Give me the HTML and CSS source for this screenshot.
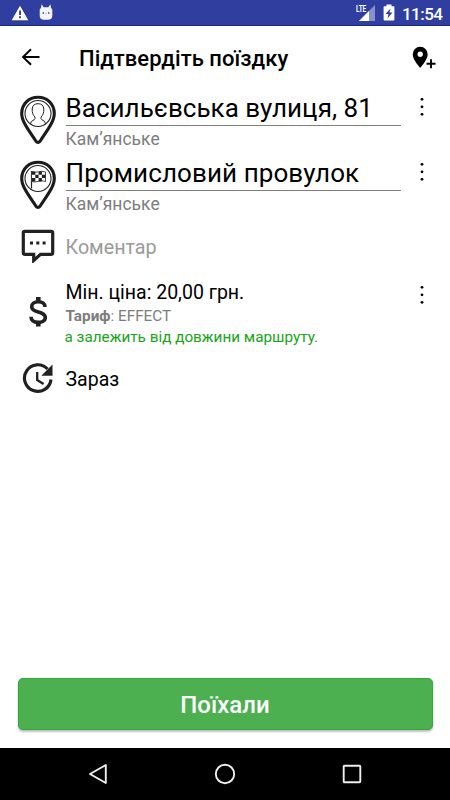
FILE: index.html
```html
<!DOCTYPE html>
<html lang="uk">
<head>
<meta charset="utf-8">
<title>Підтвердіть поїздку</title>
<link rel="stylesheet" href="styles.css">
</head>
<body>
<div class="screen">
  <div class="status">
    <svg class="warn" width="18" height="16" viewBox="0 0 18 16"><path d="M9 0.800 17.300 15.200H0.700Z" fill="#fff"/><path d="M8.100 5.500h1.900v4.500H8.100zM8.100 11.300h1.900v1.900H8.100z" fill="#303f9f"/></svg>
    <svg class="cat" width="14" height="17" viewBox="0 0 14 17"><path d="M2.700.300 4.600 3.200h4.800L11.300.300l.9 3.900Q13.300 4.600 13.300 6V11.500q0 4.300-4.500 4.300H5.200Q.7 15.800.7 11.500V6Q.7 4.600 1.800 4.200Z" fill="#f3f5ff"/><path d="M3.600 9h1.400M9 9h1.400" stroke="#303f9f" stroke-width="1.300"/><path d="M6 9.300h2" stroke="#b8c0ef"/></svg>
    <span class="grow"></span>
    <span class="signal"><svg width="16" height="16" viewBox="0 0 16 16"><path d="M16 0V16H0Z" fill="#8891c9"/><path d="M10 6v10H0Z" fill="#fff"/></svg><span class="lte">LTE</span></span>
    <svg class="battery" width="12" height="17" viewBox="0 0 12 17"><path d="M3.500.5h5v1.700H10.500q.9 0 .9.900V15.500q0 .9-.9.900h-9q-.9 0-.9-.9V3.100q0-.9.900-.9h2Z" fill="#fff"/><path d="M7.500 4.500 2.500 10h3l-1 4.500L9.500 8.500h-3Z" fill="#303f9f"/></svg>
    <span class="time">11:54</span>
  </div>

  <div class="appbar">
    <svg class="back" width="20" height="18" viewBox="0 0 20 18"><path d="M18.500 9H2M10 1.200 2 9l8 7.800" fill="none" stroke="#000" stroke-width="1.900"/></svg>
    <h1>Підтвердіть поїздку</h1>
    <svg class="addpin" width="24" height="24" viewBox="0 0 24 24"><path fill-rule="evenodd" d="M8.200.8A7.500 7.500 0 0 0 .7 8.300C.7 13.700 8.200 22 8.200 22s7.500-8.300 7.500-13.700A7.500 7.500 0 0 0 8.200.8Zm0 4.700a2.700 2.700 0 1 1 0 5.400 2.700 2.700 0 0 1 0-5.400Z"/><path d="M14.500 17.800h9M19 13.300v9" stroke="#000" stroke-width="1.900"/></svg>
  </div>

  <div class="row place">
    <svg class="icon" width="38" height="50" viewBox="0 0 38 50"><path d="M19 2.200C9.700 2.200 2.700 9 2.700 18.400c0 8 6.800 16.600 14.100 27.600q2.200 3 4.400 0C28.500 35 35.300 26.400 35.300 18.400 35.300 9 28.300 2.200 19 2.200Z" fill="#fff" stroke="#1b1b1b" stroke-width="3.100"/><circle cx="19" cy="18.500" r="13" fill="none" stroke="#222" stroke-width="1.100"/><path d="M11.500 29q0-3 3.500-4.200 1.700-.8.900-2.800c-2-2-2.900-4.500-2.700-8q.3-5.300 5.800-5.300t5.800 5.300c.2 3.500-.7 6-2.700 8q-.8 2 .9 2.800 3.500 1.200 3.500 4.200" fill="none" stroke="#222"/></svg>
    <div class="body"><div class="address">Васильєвська вулиця, 81</div><div class="city">Кам’янське</div></div>
    <svg class="dots" width="4" height="20" viewBox="0 0 4 20"><circle cx="2" cy="2.300" r="1.400"/><circle cx="2" cy="9.800" r="1.400"/><circle cx="2" cy="17.300" r="1.400"/></svg>
  </div>

  <div class="row place">
    <svg class="icon" width="38" height="50" viewBox="0 0 38 50"><path d="M19 2.200C9.700 2.200 2.700 9 2.700 18.400c0 8 6.800 16.600 14.100 27.600q2.200 3 4.400 0C28.500 35 35.300 26.400 35.300 18.400 35.300 9 28.300 2.200 19 2.200Z" fill="#fff" stroke="#1b1b1b" stroke-width="3.100"/><circle cx="19" cy="18.500" r="13" fill="none" stroke="#222" stroke-width="1.100"/><path d="M12.500 11v17.500" stroke="#222" stroke-width="1.200"/><path d="M12.500 11.500q3.500 1.500 7 .3t7 .2v9.500q-3.500-1.400-7-.2t-7 .2Z" fill="#fff" stroke="#222" stroke-width=".8"/><path d="M13 11.500h3.300v3.300H13zM19.600 11.500h3.300v3.300h-3.300zM16.300 14.800h3.300v3.300h-3.300zM22.900 14.800h3.300v3.300h-3.300zM13 18.100h3.300v3.300H13zM19.600 18.100h3.300v3.300h-3.300z" fill="#222"/></svg>
    <div class="body"><div class="address second">Промисловий провулок</div><div class="city">Кам’янське</div></div>
    <svg class="dots" width="4" height="20" viewBox="0 0 4 20"><circle cx="2" cy="2.300" r="1.400"/><circle cx="2" cy="9.800" r="1.400"/><circle cx="2" cy="17.300" r="1.400"/></svg>
  </div>

  <div class="row comment">
    <svg class="icon" width="34" height="34" viewBox="0 0 34 34"><path d="M4 2.400h26q1.700 0 1.700 1.700v19.600q0 1.700-1.700 1.700H19.500L12.700 31.500V25.400H4q-1.700 0-1.700-1.700V4.100Q2.300 2.400 4 2.400Z" fill="none" stroke="#212121" stroke-width="3.200"/><path d="M9 12.400h3v3H9zM15.300 12.400h3v3h-3zM21.600 12.400h3v3h-3z" fill="#212121"/></svg>
    <div class="body hint">Коментар</div>
  </div>

  <div class="row price">
    <svg class="icon" width="18" height="32" viewBox="0 0 18 32"><path d="M9.300 1v5M9.300 26v4.500" stroke="#212121" stroke-width="4.600"/><path d="M16 11C16 7.500 13 5.800 9.300 5.800 5.300 5.800 2.700 7.800 2.700 10.700c0 3.300 2.600 4.300 6.600 5.300s7 2.200 7 5.500c0 3-2.900 4.900-7 4.900-4.500 0-7.200-2-7.300-5.600" fill="none" stroke="#212121" stroke-width="3.600"/></svg>
    <div class="body"><div class="main">Мін. ціна: 20,00 грн.</div><div class="tariff"><b>Тариф</b>: EFFECT</div><div class="note">а залежить від довжини маршруту.</div></div>
    <svg class="dots" width="4" height="20" viewBox="0 0 4 20"><circle cx="2" cy="2.300" r="1.400"/><circle cx="2" cy="9.800" r="1.400"/><circle cx="2" cy="17.300" r="1.400"/></svg>
  </div>

  <div class="row when">
    <svg class="icon" width="32" height="32" viewBox="0 0 32 32"><path d="M25.500 6A13.300 13.300 0 1 0 29 16.500" fill="none" stroke="#212121" stroke-width="3.200"/><path d="M30.500 1.500V12.700H19.300Z" fill="#212121"/><path d="M15.200 9v8l6.400 4" fill="none" stroke="#212121" stroke-width="2.300"/></svg>
    <div class="body main">Зараз</div>
  </div>

  <span class="grow"></span>
  <button class="go">Поїхали</button>

  <div class="nav">
    <svg width="20" height="22" viewBox="0 0 20 22"><path d="M17.800 2v18L2 11Z" fill="none" stroke="#eee" stroke-width="1.900" stroke-linejoin="round"/></svg>
    <svg width="22" height="22" viewBox="0 0 22 22"><circle cx="11" cy="11" r="9.200" fill="none" stroke="#eee" stroke-width="1.900"/></svg>
    <svg width="20" height="22" viewBox="0 0 20 22"><rect x="1.700" y="2.700" width="16.600" height="16.600" rx=".8" fill="none" stroke="#eee" stroke-width="1.900"/></svg>
  </div>
</div>
</body>
</html>
```
FILE: styles.css
```css
* { box-sizing: border-box; }
body { margin: 0; background: #fff; color: #000; font-family: Roboto, "Liberation Sans", sans-serif; }
svg { display: block; flex: none; }
.screen { width: 450px; height: 800px; display: flex; flex-direction: column; overflow: hidden; }
.grow { flex: 1; }

.status { height: 26px; flex: none; background: #303f9f; border-bottom: 1px solid #142489; display: flex; align-items: flex-start; padding: 4px 9px 0 11px; }
.warn { margin-top: 1px; }
.cat { margin-left: 10px; }
.signal { position: relative; margin: 1px 8px 0 0; }
.lte { position: absolute; left: -3px; top: 0; font: 700 9px/9px Roboto, sans-serif; letter-spacing: -.2px; color: #fff; transform: scaleX(.72); transform-origin: left; }
.time { color: #fff; font-size: 17px; font-weight: 500; line-height: 20px; margin-left: 7px; letter-spacing: -.55px; width: 39px; white-space: nowrap; }

.appbar { height: 65px; flex: none; display: flex; align-items: center; padding: 0 14px 2px 21px; }
.back { margin-top: -1px; }
.appbar h1 { flex: 1; margin: 2px 0 0 38px; font-size: 22px; font-weight: 500; line-height: 28px; letter-spacing: .05px; white-space: nowrap; }

.row { flex: none; display: grid; grid-template-columns: 65.500px 335.500px 1fr; justify-items: start; }
.row .icon { justify-self: center; margin-right: -11px; }
.body { width: 100%; white-space: nowrap; }
.dots { margin-left: 19px; }
.place { height: 64.500px; }
.place .icon { margin-top: 4px; }
.place .dots { margin-top: 6px; }
.address { font-size: 26px; letter-spacing: .04px; line-height: 35px; height: 35px; border-bottom: 1px solid #808080; }
.second { letter-spacing: .09px; line-height: 34px; }
.city { font-size: 17.500px; line-height: 25px; margin-top: 1px; color: #7d7d7d; }
.comment { height: 54px; align-items: center; }
.comment .icon { margin-top: -2px; }
.hint { font-size: 19.700px; color: #9a9a9a; }
.price { height: 78px; padding-top: 5px; }
.price .icon { margin-top: 17px; }
.price .dots { margin-top: 6px; }
.main { font-size: 19.500px; line-height: 27px; }
.tariff { font-size: 15.300px; line-height: 21px; color: #7d7d7d; }
.note { font-size: 15.300px; line-height: 20px; color: #18a418; margin-left: -1px; }
.when { height: 52px; align-items: center; padding-top: 2px; }

.go { flex: none; height: 52px; margin: 0 17.500px 18px; border: 1px solid #2fac37; border-radius: 5px; background: #4caf50; color: #fff; font: 500 24px/50px Roboto, sans-serif; padding: 1px 0 0; box-shadow: 0 2px 2px rgba(0,0,0,.24), 0 0 1px rgba(0,0,0,.2); }
.nav { flex: none; height: 52px; background: #000; display: flex; justify-content: space-between; padding: 15px 88px 0; }
```
